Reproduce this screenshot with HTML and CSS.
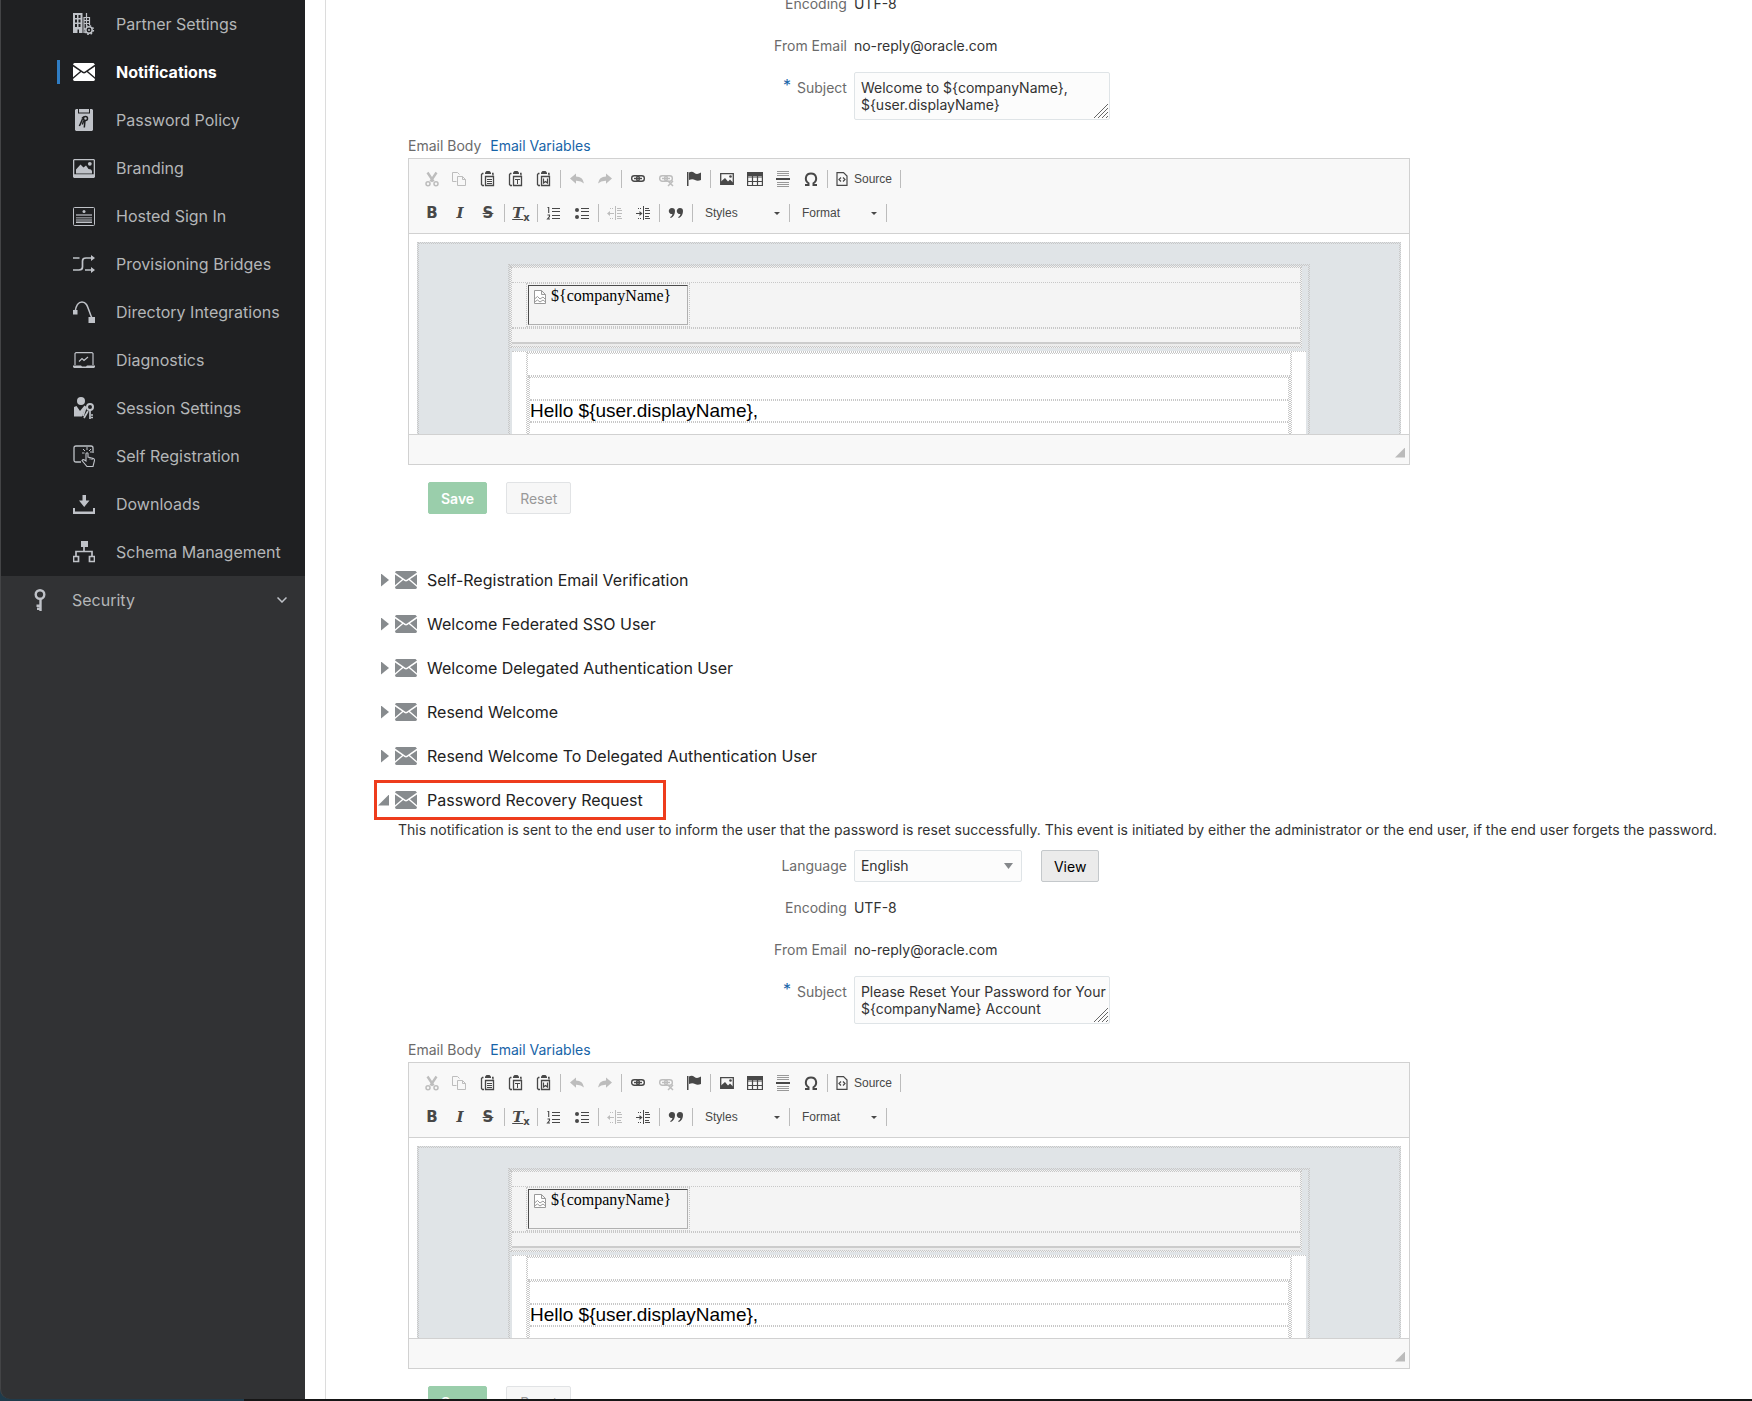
FILE: index.html
```
<!DOCTYPE html>
<html lang="en">

<head>
    <meta charset="UTF-8">
    <meta name="viewport" content="width=device-width, initial-scale=1.0">
    <title>Notifications</title>
    <link rel="stylesheet" href="styles.css">
</head>

<body>
    <svg class="sprite" aria-hidden="true">
        <symbol id="mail" viewBox="0 0 22 18">
            <path fill="currentColor" d="M1.5 0h19L22 1.5 12 8.6q-1 .6-2 0L0 1.5Q.3 0 1.500 0ZM0 3.400l7 4.900-7 5.900ZM22 3.400l-7 4.900 7 5.900ZM8.200 9.100l1.300.9q1.500.9 3 0l1.300-.9L22 16q0 2-1.500 2h-19Q0 18 0 16Z" />
        </symbol>
        <symbol id="cut" viewBox="0 0 16 16">
            <path d="M3.500 1.500l6 9M12.500 1.500l-6 9" stroke="currentColor" stroke-width="2.400" />
            <circle cx="4" cy="12.700" r="2" fill="none" stroke="currentColor" stroke-width="1.500" />
            <circle cx="12" cy="12.700" r="2" fill="none" stroke="currentColor" stroke-width="1.500" />
        </symbol>
        <symbol id="copy" viewBox="0 0 16 16">
            <path d="M4.500 10.500h-4v-9h5l2 2M5.500 5.500h5l3 3v6h-8zM10.500 5.500v3h3" fill="none" stroke="currentColor" />
        </symbol>
        <symbol id="paste" viewBox="0 0 16 16">
            <path d="M4 14.500H2.500l-1-1v-10l1-1h1M12 2.500h1v2" fill="none" stroke="currentColor" stroke-width="1.300" />
            <path d="M5 3V1.500L6.500 0h3L11 1.500V3z" fill="currentColor" />
            <path d="M5.500 5.500h8v9h-8z" fill="none" stroke="currentColor" stroke-width="1.300" />
        </symbol>
        <symbol id="undo" viewBox="0 0 16 16">
            <path d="M1 7.500L7 2.500v3q7 0 8 7-3-3-8-2.800v3z" fill="currentColor" />
        </symbol>
        <symbol id="link" viewBox="0 0 16 16">
            <rect x="1.700" y="4.700" width="7.600" height="5.600" rx="2.500" fill="none" stroke="currentColor" stroke-width="1.400" />
            <rect x="6.700" y="4.700" width="7.600" height="5.600" rx="2.500" fill="none" stroke="currentColor" stroke-width="1.400" />
            <path d="M4 7.500h8" stroke="currentColor" stroke-width="1.400" />
        </symbol>
    </svg>

    <nav class="sidebar">
        <ul class="submenu">
            <li><a href="#">
                <svg viewBox="0 0 22 22" fill="none" stroke="currentColor">
                    <path d="M1 0h8.500v20H6v-3.500H4.500V20H0V0h1zM2 2v3h2V2zM5.500 2v3h2V2zM2 6.500v3h2v-3zM5.500 6.500v3h2v-3zM2 11v3h2v-3zM5.500 11v3h2v-3z" fill="currentColor" stroke="none" fill-rule="evenodd" />
                    <path d="M13.500 0v4M11 4.500h5.500V12M11 7.500h5.500M11 10.500h5.500M13.500 4v9M11 4v16" stroke-width="1.200" />
                    <circle cx="16" cy="17" r="3.200" stroke-width="1.500" />
                    <circle cx="16" cy="17" r="4.400" stroke-width="1.500" stroke-dasharray="1.600 1.850" />
                    <circle cx="16" cy="17" r="1" stroke="none" fill="currentColor" />
                </svg>Partner Settings</a></li>
            <li class="active"><a href="#"><svg><use href="#mail" /></svg>Notifications</a></li>
            <li><a href="#">
                <svg viewBox="0 0 22 22">
                    <path d="M3 0h2v4.500h12V0h2l1 1v20l-1 1H3l-1-1V1zM6 0h10v3.500H6z" fill="currentColor" />
                    <g fill="none" stroke="#1f2022" stroke-width="1.500">
                        <circle cx="12.500" cy="9.500" r="2" />
                        <path d="M12 11.500L11.300 18.500M9 9.500q1-1.500 2-1.500M9.500 10l-2.800 6.500M8.300 13l-2 4M10.800 11.500l-1.500 4" />
                    </g>
                </svg>Password Policy</a></li>
            <li><a href="#">
                <svg viewBox="0 0 22 22" fill="currentColor">
                    <path fill-rule="evenodd" d="M1 2h20l1 1v17l-1 1H1l-1-1V3zM1.300 3.300v14h19.400v-14z" />
                    <path d="M3 16.500v-4l4.500-5 3 3 2.500-2 2.500 3.500 2.500.500 1 1.500v2.500z" />
                    <circle cx="16.800" cy="6.800" r="1.900" />
                </svg>Branding</a></li>
            <li><a href="#">
                <svg viewBox="0 0 22 22" fill="currentColor">
                    <rect x=".5" y="2.500" width="21" height="18" rx="1" fill="none" stroke="currentColor" />
                    <circle cx="11" cy="6.500" r="1.500" />
                    <path d="M3 9h16v2H3zM3 12h16v1.500H3z" opacity=".6" />
                    <path d="M3 14.500h16v1H3zM3 16.500h16V18H3z" />
                </svg>Hosted Sign In</a></li>
            <li><a href="#">
                <svg viewBox="0 0 22 22" fill="none" stroke="currentColor" stroke-width="1.700">
                    <path d="M0 5h6.500M0 17h6q3.500 0 3.500-3V8q0-3 3.500-3H19M12 17h7" />
                    <path d="M18 2l4 3-4 3zM18 14l4 3-4 3z" fill="currentColor" stroke="none" />
                </svg>Provisioning Bridges</a></li>
            <li><a href="#">
                <svg viewBox="0 0 22 22" fill="none" stroke="currentColor" stroke-width="1.500">
                    <path d="M2 11C3 4 6 1 9 1c6 0 6 8 10 16" />
                    <path d="M0 9h4.500v4.500H0zM15.500 16H22v6h-6.500z" fill="currentColor" stroke="none" />
                </svg>Directory Integrations</a></li>
            <li><a href="#">
                <svg viewBox="0 0 22 22" fill="none" stroke="currentColor" stroke-width="1.200">
                    <path d="M2 16V4.500L3 3.600h16l1 .9V16" />
                    <path d="M6 12.500l3-3 2 2 4-3.500" />
                    <path d="M0 16.500h8l1 1h4l1-1h8V18l-1 1H1l-1-1z" fill="currentColor" stroke="none" />
                </svg>Diagnostics</a></li>
            <li><a href="#">
                <svg viewBox="0 0 22 22" fill="currentColor">
                    <circle cx="8" cy="4" r="4" />
                    <path d="M1 10l2.500-1L7 14l4.500-5.500 1.500 1L9 19.500H1z" />
                    <circle cx="17" cy="10" r="3" fill="none" stroke="currentColor" stroke-width="2" />
                    <path d="M17 13v9M18 18h2M18 20.500h2M15 14l-4 7M13 10l-3 9" stroke="currentColor" stroke-width="1.700" />
                </svg>Session Settings</a></li>
            <li><a href="#">
                <svg viewBox="0 0 22 22" fill="none" stroke="currentColor" stroke-width="1.300">
                    <path d="M8 17H3q-2 0-2-2V3q0-2 2-2h15q2 0 2 2v5" />
                    <path d="M14 2v3M10 4l2 2M18 4l-2 2M9 8h2.500M17 7h2" stroke-width="1" />
                    <path d="M13 14V8.500q1.200-1.500 2 0V12l5.500 1.500q1 .5 1 2l-1.500 6h-6L9 15.500q1-1.500 2.500-.5L13 16zM17 12.500v2M19 13v2" stroke-width="1.100" />
                </svg>Self Registration</a></li>
            <li><a href="#">
                <svg viewBox="0 0 22 22">
                    <path d="M9.500 2h3.500v5.500h3.500L11.200 14 6 7.500h3.500zM0 15h2v3.500h18V15h2v6H0z" fill="currentColor" />
                </svg>Downloads</a></li>
            <li><a href="#">
                <svg viewBox="0 0 22 22" fill="none" stroke="currentColor" stroke-width="1.700">
                    <path d="M11 6v5M3 15v-4.500h16V15M.5 15.500h5v5h-5zM16.500 15.500h5v5h-5z" />
                    <path d="M8 0h7v6H8z" fill="currentColor" stroke="none" />
                </svg>Schema Management</a></li>
        </ul>
        <a class="security" href="#">
            <svg viewBox="0 0 12 22" fill="none" stroke="currentColor" stroke-width="2.400">
                <circle cx="6" cy="5.500" r="4.300" />
                <path d="M6.500 10v12M2.500 16.800h4M3 19.800h3" />
            </svg>
            <span>Security</span>
            <svg class="chevron" viewBox="0 0 10 6" fill="none" stroke="currentColor" stroke-width="1.500">
                <path d="M.5.500L5 5 9.500.500" />
            </svg>
        </a>
    </nav>

    <main>
        <section class="notification">
            <div class="row"><span class="label">Encoding</span><span>UTF-8</span></div>
            <div class="row"><span class="label">From Email</span><span>no-reply@oracle.com</span></div>
            <div class="row subject">
                <label class="label" for="subject-welcome"><sup>*</sup>Subject</label>
                <div class="textbox">
                    <textarea id="subject-welcome">Welcome to ${companyName},
${user.displayName}</textarea>
                    <svg viewBox="0 0 14 14"><path d="M0 14L14 0M4 14L14 4M8 14l6-6M12 14l2-2" stroke="#666" /></svg>
                </div>
            </div>
            <div class="body-label">Email Body <a href="#">Email Variables</a></div>
            <div class="editor"></div>
            <div class="buttons">
                <button class="save" disabled>Save</button>
                <button class="reset" disabled>Reset</button>
            </div>
        </section>

        <ul class="events">
            <li><button><i class="arrow"></i><svg><use href="#mail" /></svg>Self-Registration Email Verification</button></li>
            <li><button><i class="arrow"></i><svg><use href="#mail" /></svg>Welcome Federated SSO User</button></li>
            <li><button><i class="arrow"></i><svg><use href="#mail" /></svg>Welcome Delegated Authentication User</button></li>
            <li><button><i class="arrow"></i><svg><use href="#mail" /></svg>Resend Welcome</button></li>
            <li><button><i class="arrow"></i><svg><use href="#mail" /></svg>Resend Welcome To Delegated Authentication User</button></li>
            <li><button class="highlight"><i class="arrow open"></i><svg><use href="#mail" /></svg>Password Recovery Request</button></li>
        </ul>

        <section class="notification">
            <p>This notification is sent to the end user to inform the user that the password is reset successfully. This event is initiated by either the administrator or the end user, if the end user forgets the password.</p>
            <div class="row">
                <label class="label" for="language">Language</label>
                <div class="language">
                    <div class="dropdown">
                        <select id="language"><option>English</option></select>
                        <svg viewBox="0 0 9 6"><path d="M0 0h9L4.500 6z" fill="#85888b" /></svg>
                    </div>
                    <button class="view">View</button>
                </div>
            </div>
            <div class="row"><span class="label">Encoding</span><span>UTF-8</span></div>
            <div class="row"><span class="label">From Email</span><span>no-reply@oracle.com</span></div>
            <div class="row subject">
                <label class="label" for="subject-reset"><sup>*</sup>Subject</label>
                <div class="textbox">
                    <textarea id="subject-reset">Please Reset Your Password for Your
${companyName} Account</textarea>
                    <svg viewBox="0 0 14 14"><path d="M0 14L14 0M4 14L14 4M8 14l6-6M12 14l2-2" stroke="#666" /></svg>
                </div>
            </div>
            <div class="body-label">Email Body <a href="#">Email Variables</a></div>
            <div class="editor"></div>
            <div class="buttons">
                <button class="save" disabled>Save</button>
                <button class="reset" disabled>Reset</button>
            </div>
        </section>
    </main>

    <div class="desktop"></div>

    <template id="editor">
        <div class="toolbar">
            <div class="tools">
                <button class="off" aria-label="Cut"><svg><use href="#cut" /></svg></button>
                <button class="off" aria-label="Copy"><svg><use href="#copy" /></svg></button>
                <button aria-label="Paste"><svg viewBox="0 0 16 16"><use href="#paste" /><path d="M7 8.500h5M7 10.500h5M7 12.500h5" stroke="currentColor" /></svg></button>
                <button aria-label="Paste as plain text"><svg viewBox="0 0 16 16"><use href="#paste" /><path d="M7 8.500h5M9.500 8v5" stroke="currentColor" /></svg></button>
                <button aria-label="Paste from Word"><svg viewBox="0 0 16 16"><use href="#paste" /><path d="M7.500 7.500v4.500l2-1.500 2 1.500V7.500" fill="none" stroke="currentColor" stroke-width="1.200" /></svg></button>
                <hr>
                <button class="off" aria-label="Undo"><svg><use href="#undo" /></svg></button>
                <button class="off flip" aria-label="Redo"><svg><use href="#undo" /></svg></button>
                <hr>
                <button aria-label="Link"><svg><use href="#link" /></svg></button>
                <button class="off" aria-label="Unlink"><svg viewBox="0 0 16 16"><use href="#link" /><path d="M10 10l5 5M15 10l-5 5" stroke="currentColor" stroke-width="1.500" /></svg></button>
                <button aria-label="Anchor"><svg viewBox="0 0 16 16"><path d="M1 1h1.500v14H1zM3 1.500q3-1.500 5.500.5T15 1.500V9q-3.500 1.500-6 0T3 9z" fill="currentColor" /></svg></button>
                <hr>
                <button aria-label="Image"><svg viewBox="0 0 16 16"><path d="M1.700 2.700h12.600v10.600H1.700z" fill="none" stroke="currentColor" stroke-width="1.300" /><path d="M2 13v-2.500L6 7l3 3.500 2-2 3 3V13z" fill="currentColor" /><circle cx="11.500" cy="5.500" r="1.300" fill="currentColor" /></svg></button>
                <button aria-label="Table"><svg viewBox="0 0 16 16"><path d="M.6 1.500h14.800v13H.6zM.6 6h14.800M.6 10.500h14.800M5.500 5v9M10.500 5v9" fill="none" stroke="currentColor" stroke-width="1.200" /><path d="M0 1h16v4H0z" fill="currentColor" /></svg></button>
                <button aria-label="Insert horizontal line"><svg viewBox="0 0 16 16"><path d="M2 .5h12M2 2.500h12M2 4.500h12M2 11.500h12M2 13.500h12M2 15.500h12" stroke="#999" /><path d="M1 8h14" stroke="currentColor" stroke-width="2" /></svg></button>
                <button aria-label="Insert special character"><svg viewBox="0 0 16 16"><path d="M2 14h3.500v-1.800C1 9 2.500 2.500 8 2.500S15 9 10.500 12.200V14H14" fill="none" stroke="currentColor" stroke-width="2" /></svg></button>
                <hr>
                <button class="source"><svg viewBox="0 0 16 16"><path d="M3 1.600h6.500l3.500 3.500v9.300H3z" fill="none" stroke="currentColor" stroke-width="1.200" /><path d="M7 6.500l-2 2 2 2M9 6.500l2 2-2 2" fill="none" stroke="currentColor" stroke-width="1.200" /></svg>Source</button>
                <hr>
            </div>
            <div class="tools">
                <button class="bold" aria-label="Bold">B</button>
                <button class="italic" aria-label="Italic">I</button>
                <button class="strike" aria-label="Strikethrough">S</button>
                <hr>
                <button class="clear" aria-label="Remove format"><u>T</u><sub>x</sub></button>
                <hr>
                <button aria-label="Numbered list"><svg viewBox="0 0 16 16"><path d="M6 3.500h8M6 6.500h8M6 10.500h8M6 13.500h8" stroke="currentColor" /><path d="M1.500 2.500h1.200V8M1.500 10h2v1.500l-2 2.500h2.500" fill="none" stroke="currentColor" stroke-width="1.100" /></svg></button>
                <button aria-label="Bulleted list"><svg viewBox="0 0 16 16"><path d="M7 3.500h8M7 6.500h8M7 10.500h8M7 13.500h8" stroke="currentColor" /><circle cx="3" cy="5" r="2" fill="currentColor" /><circle cx="3" cy="12" r="2" fill="currentColor" /></svg></button>
                <hr>
                <button class="off" aria-label="Decrease indent"><svg viewBox="0 0 16 16"><path d="M8.500 1v14M10 3.500h4M10 5.500h5M10 8.500h5M10 11.500h4M10 13.500h5M1 8.500h6" stroke="currentColor" /><path d="M0 8.500L3 6v5z" fill="currentColor" /><path d="M3 3.500h4M3 13.500h4" stroke="currentColor" stroke-dasharray="1 1" /></svg></button>
                <button aria-label="Increase indent"><svg viewBox="0 0 16 16"><path d="M8.500 1v14M10 3.500h4M10 5.500h5M10 8.500h5M10 11.500h4M10 13.500h5M1 8.500h6" stroke="currentColor" /><path d="M7.500 8.500l-3-2.500v5z" fill="currentColor" /><path d="M3 3.500h4M3 13.500h4" stroke="currentColor" stroke-dasharray="1 1" /></svg></button>
                <hr>
                <button aria-label="Block quote"><svg viewBox="0 0 16 16"><path d="M4 3a3 3 0 0 1 3 3q0 5-4 7l-1-.8Q4 11 4.500 8.900A3 3 0 1 1 4 3zM12 3a3 3 0 0 1 3 3q0 5-4 7l-1-.8q2-1.200 2.500-3.300A3 3 0 1 1 12 3z" fill="currentColor" /></svg></button>
                <hr>
                <div class="combo"><select aria-label="Styles"><option>Styles</option></select><svg viewBox="0 0 6 3"><path d="M0 0h6L3 3z" fill="currentColor" /></svg></div>
                <hr>
                <div class="combo"><select aria-label="Format"><option>Format</option></select><svg viewBox="0 0 6 3"><path d="M0 0h6L3 3z" fill="currentColor" /></svg></div>
                <hr>
            </div>
        </div>
        <div class="document">
            <div class="mail dots">
                <div class="mail-table dots">
                    <div class="mail-header dots">
                        <div class="spacer"></div>
                        <div class="logo">
                            <div class="logo-cell"><span class="picture"><svg viewBox="0 0 12 14" fill="#fff" stroke="#999"><path d="M.5 13.500V.5h7l4 4v9zM7.500.5v4h4" /><path d="M.5 9l3-2.500L6 9l3-2 2.500 2.500M.5 12l3-2 2.500 2 3-2 2.500 2" fill="none" /></svg>${companyName}</span></div>
                        </div>
                        <div class="spacer"></div>
                        <div class="shade"></div>
                    </div>
                    <div class="mail-body">
                        <div class="mail-content dots">
                            <div class="line"></div>
                            <div class="mail-text dots">
                                <div class="line"></div>
                                <div class="line">Hello ${user.displayName},</div>
                                <div class="line"></div>
                            </div>
                        </div>
                    </div>
                </div>
            </div>
        </div>
        <div class="status"><i></i></div>
    </template>

    <script>
        const template = document.querySelector("template#editor");

        document.querySelectorAll("div.editor").forEach((editor) => {
            editor.append(template.content.cloneNode(true));
        });
    </script>
</body>

</html>
```
FILE: styles.css
```
* {
    margin: 0;
    padding: 0;
    box-sizing: border-box;
}

body {
    height: 100vh;
    overflow: hidden;
    display: grid;
    grid-template-columns: 305px 1fr;
    grid-template-rows: minmax(0, 1fr) 2px;
    background: linear-gradient(to right, #1f3b4b 244px, white 244px);
    font-family: Inter, "Liberation Sans", sans-serif;
    font-size: 14px;
    color: #333;
}

ul {
    list-style: none;
}

a {
    text-decoration: none;
}

button,
select,
textarea {
    font: inherit;
    color: inherit;
}

.sprite {
    position: absolute;
    width: 0;
    height: 0;
}

/* sidebar */
.sidebar {
    background-color: #313234;
    border-left: 1px solid #434446;
    border-bottom-left-radius: 10px;
    overflow: hidden;
    font-size: 16px;
}

.submenu {
    background-color: #1f2022;
}

.sidebar a {
    display: flex;
    align-items: center;
    height: 48px;
    color: #b4b6b8;
}

.submenu a {
    gap: 21px;
    padding-left: 72px;
}

.submenu svg {
    width: 22px;
    height: 22px;
    color: #bfc2c8;
}

.submenu .active a {
    padding-left: 56px;
    color: white;
    font-weight: 700;
}

.submenu .active a::before {
    content: "";
    width: 3px;
    height: 24px;
    margin-right: -8px;
    background-color: #2f7dc4;
}

.submenu .active svg {
    height: 18px;
    color: white;
}

.sidebar .security {
    padding: 0 18px 0 33px;
    gap: 26px;
}

.security svg {
    width: 12px;
    height: 22px;
    color: #bfc2c8;
}

.security .chevron {
    width: 10px;
    height: 6px;
    margin-left: auto;
}

.desktop {
    grid-column: 1 / -1;
    background: linear-gradient(to right, #1f3b4b 244px, #161616 244px);
}

/* main */
main {
    min-width: 0;
    overflow: hidden;
    background: linear-gradient(to right, white 20px, #dcdcdc 20px, #dcdcdc 21px, white 21px);
    padding-left: 21px;
}

.notification:first-child {
    margin-top: -12px;
}

.notification p {
    padding-left: 72px;
    margin-bottom: 10px;
    line-height: 20px;
    white-space: nowrap;
}

.row {
    display: grid;
    grid-template-columns: 11fr 19fr;
    gap: 7px;
    min-height: 32px;
    line-height: 32px;
    margin-bottom: 10px;
    padding-left: 1px;
}

.label {
    text-align: right;
    color: #6b6b6b;
}

.label sup {
    margin-right: 6px;
    color: #1764a8;
    font-size: 16px;
    line-height: 1;
    vertical-align: 2px;
}

.subject {
    margin-bottom: 14px;
}

.textbox,
.dropdown,
.combo {
    display: grid;
}

.textbox > *,
.dropdown > *,
.combo > * {
    grid-area: 1 / 1;
}

.textbox {
    width: 256px;
    height: 48px;
}

.textbox svg {
    width: 14px;
    height: 14px;
    place-self: end;
    margin: 2px;
}

textarea {
    resize: none;
    overflow: hidden;
    white-space: pre;
    padding: 6px 0 6px 6px;
    line-height: 17px;
    border: 1px solid #dfe4e7;
    border-radius: 2px;
    background-color: #fcfcfc;
}

select {
    appearance: none;
    border: none;
    background: none;
}

.language {
    display: flex;
    gap: 19px;
    height: 32px;
}

.dropdown {
    width: 168px;
    height: 32px;
    line-height: 20px;
}

.dropdown select {
    padding: 0 6px;
    border: 1px solid #dfe4e7;
    border-radius: 2px;
    background-color: #fcfcfc;
}

.dropdown svg {
    width: 9px;
    height: 6px;
    place-self: center end;
    margin-right: 9px;
}

.view {
    padding: 0 12px;
    color: black;
    background-color: #ebebeb;
    border: 1px solid #c4c8cb;
    border-radius: 2px;
}

.body-label {
    margin-left: 82px;
    line-height: 24px;
    color: #6b6b6b;
}

.body-label a {
    margin-left: 5px;
    color: #1764a8;
}

.buttons {
    display: flex;
    gap: 19px;
    margin: 17px 0 48px 102px;
}

.buttons button {
    height: 32px;
    padding: 0 13px;
    border: 1px solid #e1e3e5;
    border-radius: 2px;
    background-color: #f7f7f7;
    color: #999;
}

.buttons .save {
    padding: 0 12px;
    border-color: #9aceab;
    background-color: #9aceab;
    color: white;
    font-weight: 600;
}

/* list of events */
.events {
    display: flex;
    flex-direction: column;
    gap: 8px;
    padding-left: 50px;
    margin-bottom: 2px;
}

.events button {
    display: flex;
    align-items: center;
    height: 36px;
    padding-right: 21px;
    border: none;
    background: none;
    font-size: 16px;
    color: #222;
}

.events svg {
    width: 22px;
    height: 18px;
    margin: 0 10px 0 6px;
    color: #878b8e;
}

.events .highlight {
    outline: 3px solid #ee3c1c;
    outline-offset: -1px;
}

.arrow {
    width: 8px;
    height: 13px;
    margin-left: 5px;
    background-color: #878b8e;
    clip-path: polygon(0 0, 100% 50%, 0 100%);
}

.arrow.open {
    width: 11px;
    height: 11px;
    margin-left: 2px;
    clip-path: polygon(100% 0, 100% 100%, 0 100%);
}

/* editor */
.editor {
    max-width: 1002px;
    margin-left: 82px;
    border: 1px solid #d1d1d1;
    font-family: "Liberation Sans", Arial, sans-serif;
}

.toolbar {
    padding: 6px 9px;
    background-color: #f8f8f8;
    border-bottom: 1px solid #d1d1d1;
    font-size: 12px;
    color: #484848;
}

.tools {
    display: flex;
    align-items: center;
    height: 28px;
    margin-bottom: 6px;
}

.tools + .tools {
    margin-bottom: 0;
}

.tools button {
    display: flex;
    align-items: center;
    justify-content: center;
    width: 28px;
    height: 28px;
    border: none;
    background: none;
}

.tools svg {
    width: 16px;
    height: 16px;
}

.tools .off {
    color: #bdbdbd;
}

.tools .flip {
    transform: scaleX(-1);
}

.tools hr {
    width: 1px;
    height: 18px;
    margin: 0 2px;
    border: none;
    background-color: #bcbcbc;
}

.tools .source {
    width: auto;
    gap: 4px;
    padding: 0 6px 0 4px;
}

.tools .bold,
.tools .italic,
.tools .strike,
.tools .clear {
    font-family: "DejaVu Sans", sans-serif;
    font-size: 15px;
    font-weight: 700;
}

.tools .italic,
.tools .clear {
    font-family: "DejaVu Serif", serif;
    font-style: italic;
}

.tools .strike {
    text-decoration: line-through;
}

.clear sub {
    font: 700 10px "DejaVu Sans", sans-serif;
    align-self: flex-end;
    margin-bottom: 4px;
}

.combo {
    width: 92px;
    align-items: center;
}

.combo select {
    padding-left: 10px;
}

.combo svg {
    width: 6px;
    height: 3px;
    justify-self: end;
    margin-right: 7px;
}

.status {
    display: flex;
    justify-content: flex-end;
    align-items: center;
    height: 30px;
    padding-right: 4px;
    background-color: #f8f8f8;
    border-top: 1px solid #d1d1d1;
}

.status i {
    width: 10px;
    height: 10px;
    margin-top: 6px;
    background-color: #bbb;
    clip-path: polygon(100% 0, 100% 100%, 0 100%);
}

/* email shown in the editor */
.document {
    height: 200px;
    overflow: hidden;
    padding: 8px 8px 0;
    color: black;
}

.dots {
    border: 1px dotted #c8c8c8;
    outline: 1px dotted #c8c8c8;
    outline-offset: -2px;
    padding: 1px;
}

.mail {
    padding-top: 21px;
    background-color: #e0e4e7;
}

.mail-table {
    max-width: 802px;
    margin: 0 auto;
}

.mail-header {
    margin-right: 6px;
    padding-bottom: 0;
    background-color: #f4f4f4;
}

.spacer {
    height: 15px;
    border: 1px dotted #c8c8c8;
    border-width: 0 0 1px;
    margin-bottom: -1px;
}

.logo {
    height: 46px;
    padding: 0 14px;
    border: 1px dotted #c8c8c8;
    border-width: 1px 0;
}

.logo + .spacer {
    border-width: 1px 0 0;
}

.logo-cell {
    width: 164px;
    height: 44px;
    padding: 1px;
    border: 1px dotted #c8c8c8;
}

.picture {
    display: flex;
    gap: 5px;
    height: 40px;
    padding: 0 5px;
    border: 1px solid;
    border-color: #4c4c4c #b0b0b0 #b0b0b0 #4c4c4c;
    font: 16px/20px "Liberation Serif", "Times New Roman", serif;
}

.picture svg {
    width: 12px;
    height: 14px;
    margin-top: 4px;
}

.shade {
    height: 5px;
    border-top: 2px solid #ccc;
    background-color: #ececec;
}

.mail-body {
    margin: 3px 2px 0;
    border-top: 1px dotted #c8c8c8;
    padding: 0 14px;
    background-color: white;
}

.mail-content {
    padding-bottom: 0;
}

.line {
    height: 22px;
    border: 1px dotted #c8c8c8;
    border-width: 1px 0;
    font-size: 19px;
    line-height: 20px;
}

.line:first-child {
    border-top: none;
}
```
